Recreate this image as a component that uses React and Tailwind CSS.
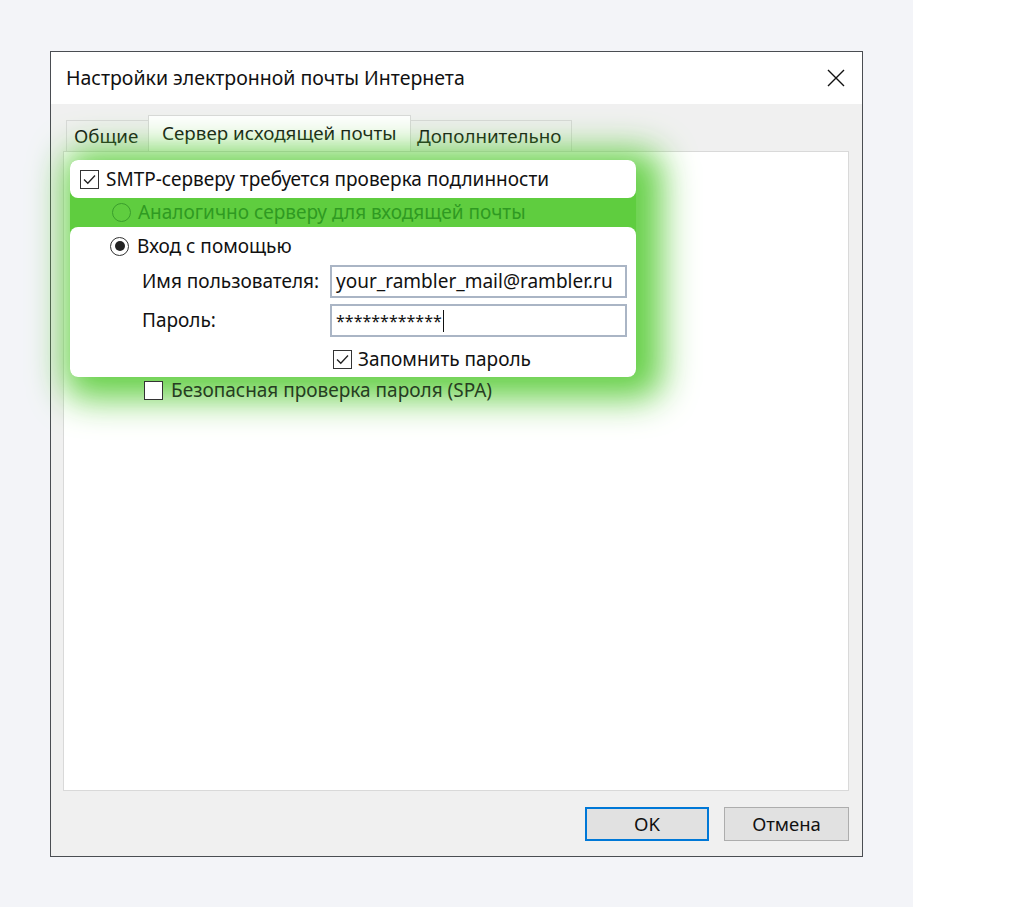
import React from "react";

const font = { fontFamily: "'Noto Sans', 'Open Sans', sans-serif" };

const Check = ({ checked, className = "" }) => (
  <span className={`flex items-center justify-center w-[19px] h-[19px] border border-[#333] bg-white shrink-0 ${className}`}>
    {checked && (
      <svg width="15" height="15" viewBox="0 0 15 15">
        <path d="M2 7.5 L5.8 11.3 L13 3.5" fill="none" stroke="#222" strokeWidth="1.3" />
      </svg>
    )}
  </span>
);

const Radio = ({ checked, className = "" }) => (
  <span className={`flex items-center justify-center w-[19px] h-[19px] rounded-full border shrink-0 ${className}`}>
    {checked && <span className="w-[10px] h-[10px] rounded-full bg-[#222]" />}
  </span>
);

export default function App() {
  return (
    <div className="flex w-[1024px] h-[907px] bg-white" style={font}>
      <div className="w-[913px] h-[907px] bg-[#f3f4f8] pl-[50px] pt-[51px]">
        {/* dialog */}
        <div className="w-[813px] h-[806px] border-[1.5px] border-[#4a4d52] bg-[#f0f0f0] flex flex-col">
          {/* title bar */}
          <div className="h-[52px] bg-white flex items-center justify-between pl-[15px] pr-[16px] shrink-0">
            <span className="text-[19.5px] text-[#111] leading-none">Настройки электронной почты Интернета</span>
            <svg width="20" height="20" viewBox="0 0 20 20">
              <path d="M2 2 L18 18 M18 2 L2 18" stroke="#111" strokeWidth="1.4" />
            </svg>
          </div>

          {/* body */}
          <div className="flex-1 flex flex-col pl-[12px] pr-[13px]">
            {/* tabs */}
            <div className="flex items-end h-[47px] pl-[3px] text-[18.8px] text-[#111]">
              <div className="h-[31px] px-[7px] flex items-center border border-b-0 border-[#d9d9d9] bg-[#f0f0f0] w-[83px]">Общие</div>
              <div className="h-[36px] px-[13px] flex items-center border border-b-0 border-[#d9d9d9] bg-white w-[263px] -ml-px">Сервер исходящей почты</div>
              <div className="h-[31px] px-[6px] flex items-center border border-b-0 border-[#d9d9d9] bg-[#f0f0f0] w-[162px] -ml-px">Дополнительно</div>
            </div>

            {/* panel */}
            <div className="h-[640px] bg-white border border-[#d9d9d9] pt-[8px] pl-[6px] text-[19px] text-[#111]">
              <div className="w-[566px] bg-[#5fcd3f] rounded-[8px] shadow-[10px_6px_34px_16px_rgba(95,205,63,0.95)]">
                <div className="h-[38px] bg-white rounded-[8px] flex items-center pl-[10px] gap-[7px]">
                  <Check checked />
                  <span>SMTP-серверу требуется проверка подлинности</span>
                </div>
                <div className="h-[29px] flex items-center pl-[42px] gap-[7px] text-[#2f9a22]">
                  <Radio className="border-[#3a9e2c]" />
                  <span>Аналогично серверу для входящей почты</span>
                </div>
                <div className="h-[150px] bg-white rounded-[8px] flex flex-col pt-[7px]">
                  <div className="flex items-center pl-[40px] gap-[8px] h-[24px]">
                    <Radio checked className="border-[#333]" />
                    <span>Вход с помощью</span>
                  </div>
                  <div className="flex items-center mt-[7px] h-[33px]">
                    <span className="w-[260px] pl-[72px]">Имя пользователя:</span>
                    <div className="w-[297px] h-[33px] border-2 border-[#aab5c5] flex items-center pl-[4px]">your_rambler_mail@rambler.ru</div>
                  </div>
                  <div className="flex items-center mt-[6px] h-[33px]">
                    <span className="w-[260px] pl-[72px]">Пароль:</span>
                    <div className="w-[297px] h-[33px] border-2 border-[#aab5c5] flex items-center pl-[4px] text-[16px]">
                      ************<span className="w-px h-[22px] bg-[#111] ml-[1px]" />
                    </div>
                  </div>
                  <div className="flex items-center mt-[8px] pl-[263px] gap-[6px]">
                    <Check checked />
                    <span>Запомнить пароль</span>
                  </div>
                </div>
              </div>
              <div className="flex items-center pl-[74px] gap-[8px] mt-[2px] h-[22px] text-[#263d22]">
                <Check className="border-[#2e4a2a] bg-transparent" />
                <span>Безопасная проверка пароля (SPA)</span>
              </div>
            </div>

            {/* buttons */}
            <div className="flex justify-end gap-[15px] mt-[16px] text-[18.5px] text-[#111]">
              <button className="w-[124px] h-[34px] bg-[#e1e1e1] border-2 border-[#0078d7]">OK</button>
              <button className="w-[125px] h-[34px] bg-[#e1e1e1] border border-[#adadad]">Отмена</button>
            </div>
          </div>
        </div>
      </div>
    </div>
  );
}
